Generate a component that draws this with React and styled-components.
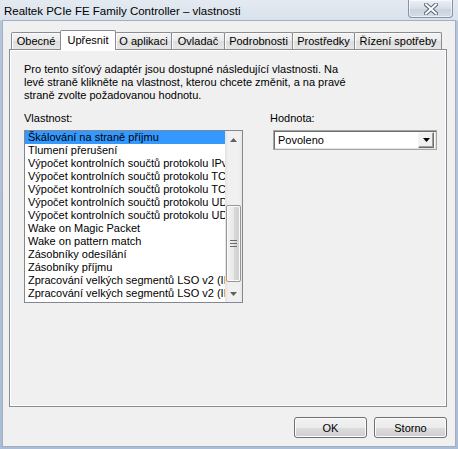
import React from 'react';
import styled, {createGlobalStyle} from "styled-components";

const GlobalStyle = createGlobalStyle`
  html, body {
    margin: 0;
    padding: 0;
    background: #ffffff;
  }
  * {
    box-sizing: border-box;
  }
`

const Window = styled.div`
  width: 458px;
  height: 449px;
  display: flex;
  flex-direction: column;
  padding: 0 2px 2px 2px;
  background: linear-gradient(to bottom, #e4eaf1 0px, #d9e2ec 20px, #b4c6dc 21px, #a9bdd6 100%);
  font-family: "Liberation Sans", Arial, sans-serif;
  font-size: 11px;
  color: #000;
  overflow: hidden;
`

const TitleBar = styled.div`
  height: 20px;
  display: flex;
  align-items: flex-start;
  justify-content: space-between;
`

const Title = styled.div`
  padding: 5px 0 0 2px;
  font-size: 11.5px;
  line-height: 13px;
  color: #000;
`

const CloseBtn = styled.div`
  width: 45px;
  height: 18px;
  margin-right: 3px;
  border: 1px solid #8593a5;
  border-top: none;
  border-radius: 0 0 4px 4px;
  background: linear-gradient(to bottom, #edf1f6, #d6dee8 50%, #c9d3df 51%, #d3dce7);
  box-shadow: inset 0 0 0 1px rgba(255, 255, 255, 0.6);
  display: flex;
  align-items: center;
  justify-content: center;
`

const Client = styled.div`
  flex: 1;
  display: flex;
  flex-direction: column;
  background: #f0f0f0;
  border: 1px solid #a3afbe;
  padding: 9px 8px 8px 6px;
`

const TabRow = styled.div`
  height: 19px;
  display: flex;
  align-items: flex-end;
  padding-left: 2px;
`

const Tab = styled.div`
  position: relative;
  width: ${({$w}) => $w}px;
  height: ${({$active}) => $active ? 20 : 17}px;
  margin-left: ${({$first}) => $first ? 0 : -1}px;
  margin-bottom: ${({$active}) => $active ? -1 : 0}px;
  z-index: ${({$active}) => $active ? 2 : 1};
  border: 1px solid #898c95;
  border-bottom: none;
  border-radius: 2px 2px 0 0;
  background: ${({$active}) => $active
    ? '#ffffff'
    : 'linear-gradient(to bottom, #f3f3f3, #ebebeb 50%, #dddddd 51%, #e6e6e6)'};
  box-shadow: ${({$active}) => $active ? 'none' : 'inset 1px 1px 0 #fcfcfc'};
  display: flex;
  align-items: center;
  justify-content: center;
  white-space: nowrap;
  padding-bottom: ${({$active}) => $active ? 1 : 0}px;
`

const Panel = styled.div`
  height: 358px;
  border: 1px solid #898c95;
  background: #f0f0f0;
  box-shadow: inset 0 0 0 1px #ffffff;
  padding: 13px 14px 0 14px;
`

const Desc = styled.p`
  margin: 0;
  line-height: 13px;
`

const Fields = styled.div`
  margin-top: 10px;
  display: grid;
  grid-template-columns: 219px 1fr;
  column-gap: 27px;
`

const Field = styled.div`
  display: flex;
  flex-direction: column;
`

const Label = styled.label`
  line-height: 13px;
  margin-bottom: 5px;
`

const ListBox = styled.div`
  width: 219px;
  height: 173px;
  border: 1px solid #828790;
  background: #ffffff;
  display: flex;
`

const Items = styled.div`
  flex: 1;
  overflow: hidden;
`

const Item = styled.div`
  height: 13px;
  line-height: 13px;
  padding-left: 3px;
  white-space: nowrap;
  overflow: hidden;
  background: ${({$selected}) => $selected ? '#3399ff' : 'transparent'};
`

const ScrollBar = styled.div`
  width: 17px;
  display: flex;
  flex-direction: column;
  background: linear-gradient(to right, #e3e3e3, #f0f0f0 20%, #f0f0f0 80%, #e8e8e8);
`

const ArrowBtn = styled.div`
  height: 17px;
  display: flex;
  align-items: center;
  justify-content: center;
`

const Track = styled.div`
  flex: 1;
  padding: 57px 1px 0 1px;
`

const Thumb = styled.div`
  height: 77px;
  border: 1px solid #979797;
  border-radius: 2px;
  background: linear-gradient(to right, #f3f3f3, #e9e9e9 50%, #d9d9d9 51%, #d0d0d0);
  box-shadow: inset 0 0 0 1px #fbfbfb;
  display: flex;
  align-items: center;
  justify-content: center;
`

const Combo = styled.div`
  margin-left: 3px;
  width: 164px;
  height: 20px;
  border: 1px solid #a5a5a5;
  box-shadow: inset 1px 1px 0 #6d6d6d, inset -1px -1px 0 #e3e3e3;
  background: #ffffff;
  display: flex;
  align-items: center;
  padding: 0 2px 0 4px;
`

const ComboText = styled.span`
  flex: 1;
  line-height: 13px;
`

const DropBtn = styled.div`
  width: 16px;
  height: 16px;
  background: #f0f0f0;
  border: 1px solid;
  border-color: #f6f6f6 #6d6d6d #6d6d6d #f6f6f6;
  box-shadow: inset -1px -1px 0 #a0a0a0;
  display: flex;
  align-items: center;
  justify-content: center;
`

const Footer = styled.div`
  margin-top: 10px;
  display: flex;
  justify-content: flex-end;
  gap: 7px;
`

const Button = styled.div`
  width: 73px;
  height: 21px;
  border: 1px solid #707070;
  border-radius: 3px;
  background: linear-gradient(to bottom, #f2f2f2, #ebebeb 50%, #dddddd 51%, #cfcfcf);
  box-shadow: inset 0 0 0 1px #fcfcfc;
  display: flex;
  align-items: center;
  justify-content: center;
`

const tabs = [
  {label: 'Obecné', w: 50},
  {label: 'Upřesnit', w: 56, active: true},
  {label: 'O aplikaci', w: 57},
  {label: 'Ovladač', w: 54},
  {label: 'Podrobnosti', w: 69},
  {label: 'Prostředky', w: 63},
  {label: 'Řízení spotřeby', w: 88},
]

const items = [
  'Škálování na straně příjmu',
  'Tlumení přerušení',
  'Výpočet kontrolních součtů protokolu IPv4',
  'Výpočet kontrolních součtů protokolu TCP (IPv4)',
  'Výpočet kontrolních součtů protokolu TCP (IPv6)',
  'Výpočet kontrolních součtů protokolu UDP (IPv4)',
  'Výpočet kontrolních součtů protokolu UDP (IPv6)',
  'Wake on Magic Packet',
  'Wake on pattern match',
  'Zásobníky odesílání',
  'Zásobníky příjmu',
  'Zpracování velkých segmentů LSO v2 (IPv4)',
  'Zpracování velkých segmentů LSO v2 (IPv6)',
]

const App = () => {
    return (
        <>
            <GlobalStyle/>
            <Window>
                <TitleBar>
                    <Title>Realtek PCIe FE Family Controller – vlastnosti</Title>
                    <CloseBtn>
                        <svg width="14" height="12" viewBox="0 0 14 12">
                            <path d="M2 1.5 L12 10.5 M12 1.5 L2 10.5" stroke="#5a6677" strokeWidth="4" strokeLinecap="square"/>
                            <path d="M2 1.5 L12 10.5 M12 1.5 L2 10.5" stroke="#ffffff" strokeWidth="2" strokeLinecap="square"/>
                        </svg>
                    </CloseBtn>
                </TitleBar>
                <Client>
                    <TabRow>
                        {tabs.map((t, i) => (
                            <Tab key={t.label} $w={t.w} $active={t.active} $first={i === 0}>{t.label}</Tab>
                        ))}
                    </TabRow>
                    <Panel>
                        <Desc>
                            Pro tento síťový adaptér jsou dostupné následující vlastnosti. Na<br/>
                            levé straně klikněte na vlastnost, kterou chcete změnit, a na pravé<br/>
                            straně zvolte požadovanou hodnotu.
                        </Desc>
                        <Fields>
                            <Field>
                                <Label>Vlastnost:</Label>
                                <ListBox>
                                    <Items>
                                        {items.map((it, i) => (
                                            <Item key={it} $selected={i === 0}>{it}</Item>
                                        ))}
                                    </Items>
                                    <ScrollBar>
                                        <ArrowBtn>
                                            <svg width="7" height="4" viewBox="0 0 7 4"><path d="M0 4 L3.5 0 L7 4 Z" fill="#606060"/></svg>
                                        </ArrowBtn>
                                        <Track>
                                            <Thumb>
                                                <svg width="7" height="7" viewBox="0 0 7 7">
                                                    <path d="M0 0.5 H7 M0 3.5 H7 M0 6.5 H7" stroke="#6a6a6a" strokeWidth="1"/>
                                                </svg>
                                            </Thumb>
                                        </Track>
                                        <ArrowBtn>
                                            <svg width="7" height="4" viewBox="0 0 7 4"><path d="M0 0 L7 0 L3.5 4 Z" fill="#606060"/></svg>
                                        </ArrowBtn>
                                    </ScrollBar>
                                </ListBox>
                            </Field>
                            <Field>
                                <Label>Hodnota:</Label>
                                <Combo>
                                    <ComboText>Povoleno</ComboText>
                                    <DropBtn>
                                        <svg width="7" height="4" viewBox="0 0 7 4"><path d="M0 0 L7 0 L3.5 4 Z" fill="#000"/></svg>
                                    </DropBtn>
                                </Combo>
                            </Field>
                        </Fields>
                    </Panel>
                    <Footer>
                        <Button>OK</Button>
                        <Button>Storno</Button>
                    </Footer>
                </Client>
            </Window>
        </>
    );
};

export default App;
